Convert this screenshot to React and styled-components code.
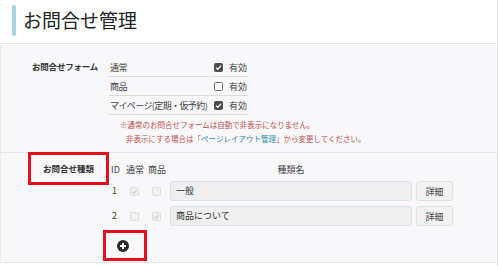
import { Fragment } from "react"
import styled, { createGlobalStyle } from "styled-components"

const Global = createGlobalStyle`
  body {
    margin: 0;
    background: #fff;
    font-family: "Noto Sans CJK JP", "Noto Sans", sans-serif;
    color: #333;
  }
`

const Page = styled.div`
  width: 497px;
  height: 266px;
  border-right: 1px solid #e6e6e6;
  display: flex;
  flex-direction: column;
`

const Header = styled.div`
  height: 44px;
  border-bottom: 1px solid #e8e8e8;
  display: flex;
  align-items: center;
  padding-left: 12px;
  gap: 7px;
  box-sizing: border-box;
`

const Accent = styled.span`
  width: 4px;
  height: 31px;
  border-radius: 2px;
  background: #a8d5e2;
  margin-top: -3px;
`

const Title = styled.h1`
  margin: 0 0 3px;
  font-size: 19px;
  font-weight: 400;
  line-height: 24px;
  color: #222;
`

const Panel = styled.div`
  margin-top: 1px;
  height: 217px;
  background: #f8f8fa;
  border-left: 1px solid #ececec;
  border-bottom: 1px solid #e6e6e6;
`

const Section = styled.div`
  display: flex;
  border-bottom: ${(p) => (p.$last ? "none" : "1px solid #e6e6e6")};
  height: ${(p) => p.$h}px;
  box-sizing: border-box;
`

const LabelCol = styled.div`
  width: 107px;
  flex-shrink: 0;
`

const Label = styled.div`
  font-size: 8.5px;
  font-weight: 700;
  line-height: 12px;
  color: #333;
  padding: 15px 0 0 31px;
  white-space: nowrap;
  letter-spacing: -0.2px;
`

const MarkedLabel = styled.div`
  margin: -1px 0 0 27px;
  width: 81px;
  height: 33px;
  box-sizing: border-box;
  border: 3px solid #e60f1e;
  display: flex;
  align-items: center;
  justify-content: center;
  font-size: 8.5px;
  font-weight: 700;
  color: #333;
  white-space: nowrap;
  padding-bottom: 1px;
`

const Content = styled.div`
  padding-top: ${(p) => p.$top}px;
`

const FormTable = styled.div`
  display: grid;
  grid-template-columns: 99px 39px;
  column-gap: 1px;
  margin-left: 1px;
`

const Cell = styled.div`
  height: 19px;
  border-bottom: 1px solid #dcdcdc;
  box-sizing: border-box;
  display: flex;
  align-items: center;
  gap: 6px;
  font-size: 9px;
  color: #444;
  padding-left: ${(p) => (p.$check ? 5 : 1)}px;
  white-space: nowrap;
  letter-spacing: ${(p) => (p.$check ? 0 : -0.6)}px;
`

const Box = styled.span`
  width: 9px;
  height: 9px;
  box-sizing: border-box;
  border-radius: 1.5px;
  flex-shrink: 0;
  display: inline-flex;
  align-items: center;
  justify-content: center;
  background: ${(p) =>
    p.$disabled ? "#f1f1f1" : p.$checked ? "#4d4d4d" : "#fff"};
  border: 1px solid
    ${(p) => (p.$disabled ? "#dedede" : p.$checked ? "#4d4d4d" : "#6a6a6a")};
`

const Check = ({ checked, disabled }) => (
  <Box $checked={checked} $disabled={disabled}>
    {checked && (
      <svg width="7" height="7" viewBox="0 0 10 10">
        <path
          d="M1.5 5.2 L4 7.6 L8.6 2.4"
          fill="none"
          stroke={disabled ? "#cfcfcf" : "#fff"}
          strokeWidth="1.8"
        />
      </svg>
    )}
  </Box>
)

const Notes = styled.div`
  margin-top: 3px;
  font-size: 7.5px;
  line-height: 14px;
  color: #c0504d;
  white-space: nowrap;
`

const NoteLine = styled.div`
  padding-left: ${(p) => p.$indent}px;
`

const Link = styled.span`
  color: #2a8ab0;
`

const TypeGrid = styled.div`
  display: grid;
  grid-template-columns: 17px 22px 22px 242px 41px;
  align-items: center;
  margin-left: 1px;
`

const Head = styled.div`
  font-size: 9px;
  color: #444;
  height: 18px;
  line-height: 18px;
  padding-left: ${(p) => p.$pl || 0}px;
  text-align: ${(p) => (p.$center ? "center" : "left")};
  margin-bottom: 2px;
`

const RowCell = styled.div`
  height: 25px;
  display: flex;
  align-items: flex-start;
  padding-top: ${(p) => (p.$box ? 6 : 0)}px;
  box-sizing: border-box;
  font-size: 9px;
  color: #444;
  padding-left: ${(p) => p.$pl || 0}px;
  line-height: 20px;
`

const NameInput = styled.div`
  width: 242px;
  height: 20px;
  box-sizing: border-box;
  background: #efefef;
  border: 1px solid #d5e2eb;
  border-radius: 3px;
  font-size: 9px;
  color: #333;
  line-height: 18px;
  padding-left: 5px;
`

const DetailButton = styled.button`
  margin-left: 4px;
  width: 37px;
  height: 20px;
  box-sizing: border-box;
  background: #f2f2f2;
  border: 1px solid #e0e0e0;
  border-radius: 3px;
  font-family: inherit;
  font-size: 9px;
  color: #444;
  padding: 0;
`

const AddMark = styled.div`
  margin: -1px 0 0 -5px;
  width: 44px;
  height: 31px;
  box-sizing: border-box;
  border: 3px solid #e60f1e;
  display: flex;
  align-items: center;
  justify-content: center;
  padding-right: 4px;
  padding-top: 1px;
`

const formRows = [
  { name: "通常", on: true },
  { name: "商品", on: false },
  { name: "マイページ(定期・仮予約)", on: true },
]

const types = [
  { id: 1, normal: true, product: false, name: "一般" },
  { id: 2, normal: false, product: true, name: "商品について" },
]

const App = () => {
  return (
    <Page>
      <Global />
      <Header>
        <Accent />
        <Title>お問合せ管理</Title>
      </Header>
      <Panel>
        <Section $h={108}>
          <LabelCol>
            <Label>お問合せフォーム</Label>
          </LabelCol>
          <Content $top={13}>
            <FormTable>
              {formRows.map((r) => (
                <Fragment key={r.name}>
                  <Cell>{r.name}</Cell>
                  <Cell $check>
                    <Check checked={r.on} />
                    有効
                  </Cell>
                </Fragment>
              ))}
            </FormTable>
            <Notes>
              <NoteLine $indent={12}>※通常のお問合せフォームは自動で非表示になりません。</NoteLine>
              <NoteLine $indent={18}>
                非表示にする場合は「<Link>ページレイアウト管理</Link>」から変更してください。
              </NoteLine>
            </Notes>
          </Content>
        </Section>
        <Section $h={108} $last>
          <LabelCol>
            <MarkedLabel>お問合せ種類</MarkedLabel>
          </LabelCol>
          <Content $top={8}>
            <TypeGrid>
              <Head $pl={2}>ID</Head>
              <Head>通常</Head>
              <Head>商品</Head>
              <Head $center>種類名</Head>
              <Head />
              {types.map((t) => (
                <Fragment key={t.id}>
                  <RowCell $pl={3}>{t.id}</RowCell>
                  <RowCell $box $pl={4}>
                    <Check checked={t.normal} disabled />
                  </RowCell>
                  <RowCell $box $pl={4}>
                    <Check checked={t.product} disabled />
                  </RowCell>
                  <RowCell>
                    <NameInput>{t.name}</NameInput>
                  </RowCell>
                  <RowCell>
                    <DetailButton>詳細</DetailButton>
                  </RowCell>
                </Fragment>
              ))}
            </TypeGrid>
            <AddMark>
              <svg width="12" height="12" viewBox="0 0 12 12">
                <circle cx="6" cy="6" r="6" fill="#2b2b2b" />
                <path d="M6 3 V9 M3 6 H9" stroke="#fff" strokeWidth="2" />
              </svg>
            </AddMark>
          </Content>
        </Section>
      </Panel>
    </Page>
  )
}

export default App
